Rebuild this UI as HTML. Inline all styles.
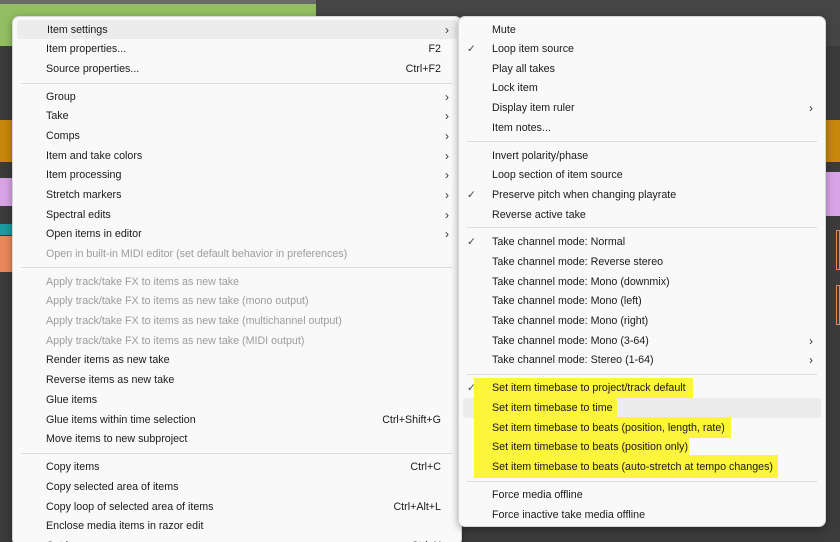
<!DOCTYPE html>
<html><head><meta charset="utf-8"><style>
*{margin:0;padding:0;box-sizing:border-box}
html{width:840px;height:542px;overflow:hidden}
body{width:840px;height:542px;overflow:hidden;background:#3b3b3b;position:relative;font-family:"Liberation Sans",sans-serif;font-size:10.7px;color:#1a1a1a}
.bg{position:absolute}
.menu{position:absolute;background:#f9f9f9;border:1px solid #d6d6d6;border-radius:7px;box-shadow:0 2px 8px rgba(0,0,0,.35)}
.it{position:absolute;left:0;right:0;height:19px;line-height:21px;white-space:nowrap}
.it span.t{position:absolute;left:33px}
.it span.k{position:absolute;right:20px}
.it span.a{position:absolute;right:12px;font-size:12px;color:#333}
.it span.c{position:absolute;left:8px;color:#444}
.dis{color:#9c9c9c}
.sep{position:absolute;left:8px;right:8px;height:1px;background:#dcdcdc}
.hov{background:#ececec;left:4px;right:4px;border-radius:3px}
.yl{position:absolute;background:#fdf53a}
</style></head><body>
<div class="bg" style="left:0;top:0;width:316px;height:46px;background:#93bf62"></div>
<div class="bg" style="left:0;top:0;width:316px;height:4px;background:#6a6a6a"></div>
<div class="bg" style="left:316px;top:0;width:524px;height:46px;background:#454545"></div>
<div class="bg" style="left:0;top:120px;width:14px;height:42px;background:#c8870c"></div>
<div class="bg" style="left:0;top:178px;width:14px;height:28px;background:#d8a4e6"></div>
<div class="bg" style="left:0;top:224px;width:14px;height:11px;background:#1b9aa0"></div>
<div class="bg" style="left:0;top:236px;width:14px;height:36px;background:#e8875a"></div>
<div class="bg" style="left:826px;top:120px;width:14px;height:42px;background:#c8870c"></div>
<div class="bg" style="left:826px;top:172px;width:14px;height:44px;background:#d8a4e6"></div>
<div class="bg" style="left:836px;top:230px;width:4px;height:40px;border:1px solid #e8875a"></div>
<div class="bg" style="left:836px;top:285px;width:4px;height:40px;border:1px solid #e8875a"></div>

<div class="menu" style="left:12px;top:16px;width:450px;height:530px">
<div class="it hov" style="top:3px"><span class="t" style="left:30px">Item settings</span><span class="a" style="right:8px">›</span></div>
<div class="it" style="top:22px"><span class="t">Item properties...</span><span class="k">F2</span></div>
<div class="it" style="top:42px"><span class="t">Source properties...</span><span class="k">Ctrl+F2</span></div>
<div class="sep" style="top:66px"></div>
<div class="it" style="top:70px"><span class="t">Group</span><span class="a">›</span></div>
<div class="it" style="top:89px"><span class="t">Take</span><span class="a">›</span></div>
<div class="it" style="top:109px"><span class="t">Comps</span><span class="a">›</span></div>
<div class="it" style="top:129px"><span class="t">Item and take colors</span><span class="a">›</span></div>
<div class="it" style="top:148px"><span class="t">Item processing</span><span class="a">›</span></div>
<div class="it" style="top:168px"><span class="t">Stretch markers</span><span class="a">›</span></div>
<div class="it" style="top:188px"><span class="t">Spectral edits</span><span class="a">›</span></div>
<div class="it" style="top:207px"><span class="t">Open items in editor</span><span class="a">›</span></div>
<div class="it dis" style="top:227px"><span class="t">Open in built-in MIDI editor (set default behavior in preferences)</span></div>
<div class="sep" style="top:250px"></div>
<div class="it dis" style="top:255px"><span class="t">Apply track/take FX to items as new take</span></div>
<div class="it dis" style="top:274px"><span class="t">Apply track/take FX to items as new take (mono output)</span></div>
<div class="it dis" style="top:294px"><span class="t">Apply track/take FX to items as new take (multichannel output)</span></div>
<div class="it dis" style="top:314px"><span class="t">Apply track/take FX to items as new take (MIDI output)</span></div>
<div class="it" style="top:333px"><span class="t">Render items as new take</span></div>
<div class="it" style="top:353px"><span class="t">Reverse items as new take</span></div>
<div class="it" style="top:373px"><span class="t">Glue items</span></div>
<div class="it" style="top:393px"><span class="t">Glue items within time selection</span><span class="k">Ctrl+Shift+G</span></div>
<div class="it" style="top:412px"><span class="t">Move items to new subproject</span></div>
<div class="sep" style="top:436px"></div>
<div class="it" style="top:440px"><span class="t">Copy items</span><span class="k">Ctrl+C</span></div>
<div class="it" style="top:460px"><span class="t">Copy selected area of items</span></div>
<div class="it" style="top:480px"><span class="t">Copy loop of selected area of items</span><span class="k">Ctrl+Alt+L</span></div>
<div class="it" style="top:499px"><span class="t">Enclose media items in razor edit</span></div>
<div class="it" style="top:519px"><span class="t">Cut items</span><span class="k">Ctrl+X</span></div>
</div>

<div class="menu" style="left:458px;top:16px;width:368px;height:511px">
<div class="it" style="top:3px"><span class="t">Mute</span></div>
<div class="it" style="top:22px"><span class="c">✓</span><span class="t">Loop item source</span></div>
<div class="it" style="top:42px"><span class="t">Play all takes</span></div>
<div class="it" style="top:61px"><span class="t">Lock item</span></div>
<div class="it" style="top:81px"><span class="t">Display item ruler</span><span class="a">›</span></div>
<div class="it" style="top:101px"><span class="t">Item notes...</span></div>
<div class="sep" style="top:124px"></div>
<div class="it" style="top:129px"><span class="t">Invert polarity/phase</span></div>
<div class="it" style="top:148px"><span class="t">Loop section of item source</span></div>
<div class="it" style="top:168px"><span class="c">✓</span><span class="t">Preserve pitch when changing playrate</span></div>
<div class="it" style="top:188px"><span class="t">Reverse active take</span></div>
<div class="sep" style="top:210px"></div>
<div class="it" style="top:215px"><span class="c">✓</span><span class="t">Take channel mode: Normal</span></div>
<div class="it" style="top:235px"><span class="t">Take channel mode: Reverse stereo</span></div>
<div class="it" style="top:255px"><span class="t">Take channel mode: Mono (downmix)</span></div>
<div class="it" style="top:274px"><span class="t">Take channel mode: Mono (left)</span></div>
<div class="it" style="top:294px"><span class="t">Take channel mode: Mono (right)</span></div>
<div class="it" style="top:314px"><span class="t">Take channel mode: Mono (3-64)</span><span class="a">›</span></div>
<div class="it" style="top:333px"><span class="t">Take channel mode: Stereo (1-64)</span><span class="a">›</span></div>
<div class="sep" style="top:357px"></div>
<div class="it hov" style="top:381px;height:20px"></div>
<div class="yl" style="left:15px;top:361px;width:219px;height:20px"></div>
<div class="yl" style="left:15px;top:381px;width:143px;height:20px"></div>
<div class="yl" style="left:15px;top:400px;width:257px;height:21px"></div>
<div class="yl" style="left:15px;top:420px;width:215px;height:20px"></div>
<div class="yl" style="left:15px;top:438px;width:304px;height:23px"></div>
<div class="it" style="top:361px"><span class="c">✓</span><span class="t">Set item timebase to project/track default</span></div>
<div class="it" style="top:381px"><span class="t">Set item timebase to time</span></div>
<div class="it" style="top:401px"><span class="t">Set item timebase to beats (position, length, rate)</span></div>
<div class="it" style="top:420px"><span class="t">Set item timebase to beats (position only)</span></div>
<div class="it" style="top:440px"><span class="t">Set item timebase to beats (auto-stretch at tempo changes)</span></div>
<div class="sep" style="top:464px"></div>
<div class="it" style="top:468px"><span class="t">Force media offline</span></div>
<div class="it" style="top:488px"><span class="t">Force inactive take media offline</span></div>
</div>
</body></html>
